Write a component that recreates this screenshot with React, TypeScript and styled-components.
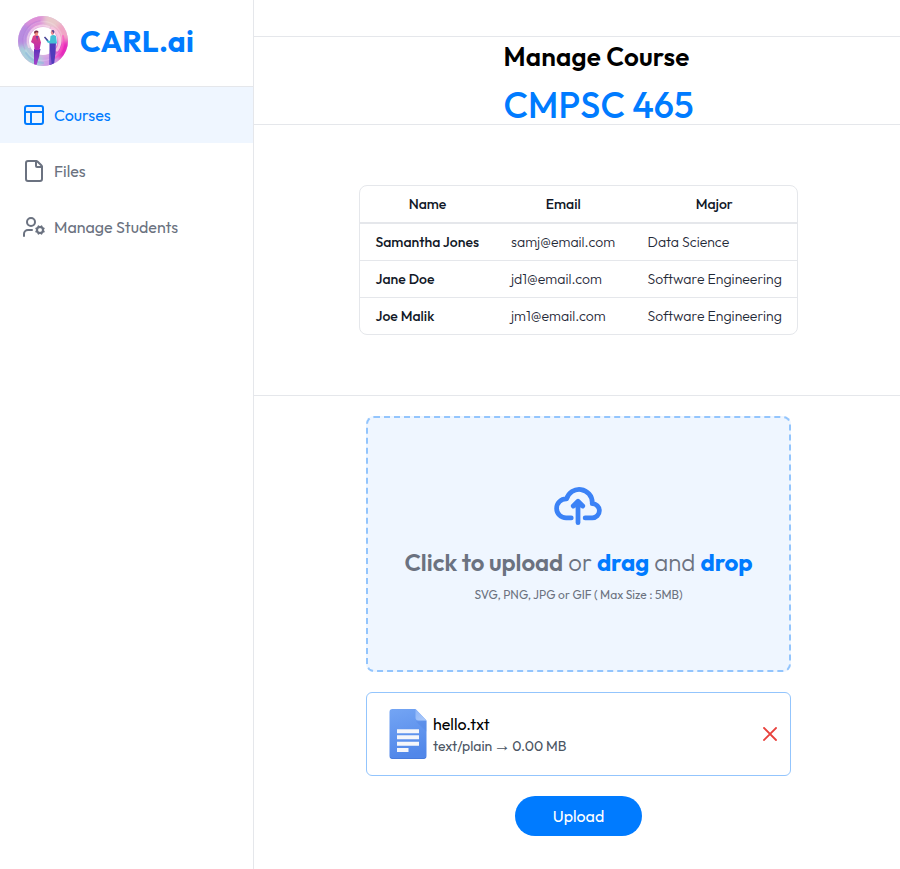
import React from 'react';
import styled, { createGlobalStyle } from 'styled-components';
import { File, PanelsTopLeft, UserCog } from 'lucide-react';

const blue = '#007bff';
const line = '#e5e7eb';
const fontStack = "Outfit, 'Liberation Sans', sans-serif";

const GlobalStyle = createGlobalStyle`
  *, *::before, *::after { box-sizing: border-box; }
  body { margin: 0; background: #fff; color: #000; overflow: hidden; font-family: ${fontStack}; }
  h1, h2, p { margin: 0; }
`;

const Page = styled.div`
  display: flex;
  width: 900px;
  height: 869px;
  overflow: hidden;
`;

const Sidebar = styled.aside`
  flex: 0 0 254px;
  border-right: 1px solid ${line};
`;

const Brand = styled.div`
  display: flex;
  align-items: center;
  gap: 12px;
  height: 87px;
  padding: 0 0 4px 18px;
  border-bottom: 1px solid ${line};
`;

const BrandName = styled.span`
  color: ${blue};
  font-size: 30px;
  font-weight: 700;
  line-height: 36px;
  letter-spacing: 0.3px;
`;

const NavItem = styled.a<{ $active?: boolean }>`
  display: flex;
  align-items: center;
  gap: 8px;
  height: 56px;
  padding: 0 22px;
  color: ${p => (p.$active ? blue : '#6b7280')};
  background: ${p => (p.$active ? '#eff6ff' : 'transparent')};
  font-size: 16px;
`;

const Main = styled.main`
  flex: 0 0 649px;
`;

const TopBar = styled.div`
  height: 37px;
  border-bottom: 1px solid ${line};
`;

const Heading = styled.header`
  height: 88px;
  padding-left: 249.5px;
  border-bottom: 1px solid ${line};
`;

const Title = styled.h1`
  font-size: 26px;
  font-weight: 600;
  line-height: 40px;
  letter-spacing: 0.18px;
`;

const CourseCode = styled.h2`
  color: ${blue};
  font-size: 36px;
  font-weight: 500;
  line-height: 56px;
`;

const TableSection = styled.section`
  display: flex;
  justify-content: center;
  height: 271px;
  padding-top: 60px;
  border-bottom: 1px solid ${line};
`;

const Table = styled.div`
  width: 439px;
  height: 150px;
  border: 1px solid ${line};
  border-radius: 8px;
  font-size: 14px;
`;

const TableRow = styled.div<{ $head?: boolean }>`
  display: grid;
  grid-template-columns: 135px 136.5px 1fr;
  height: ${p => (p.$head ? 38 : 37)}px;
  border-bottom: ${p => (p.$head ? 2 : 1)}px solid ${line};
  &:last-child { border-bottom: 0; height: 36px; }
`;

const HeadCell = styled.div`
  color: #111827;
  font-weight: 500;
  line-height: 36px;
  text-align: center;
`;

const Cell = styled.div<{ $strong?: boolean }>`
  padding-left: ${p => (p.$strong ? 15.5 : 16)}px;
  color: ${p => (p.$strong ? '#111827' : '#1f2937')};
  font-weight: ${p => (p.$strong ? 500 : 300)};
  letter-spacing: ${p => (p.$strong ? 0.02 : 0.03)}px;
  line-height: 36px;
  white-space: nowrap;
`;

const UploadSection = styled.section`
  display: flex;
  flex-direction: column;
  align-items: center;
  gap: 20px;
  padding-top: 20px;
`;

const DropZone = styled.div`
  display: flex;
  flex-direction: column;
  align-items: center;
  width: 425px;
  height: 256px;
  padding-top: 69px;
  background: #eff6ff;
  border: 2px dashed #93c5fd;
  border-radius: 8px;
  color: #6b7280;
`;

const DropPrompt = styled.p`
  margin-top: 21px;
  font-size: 24px;
  font-weight: 300;
  line-height: 32px;
  letter-spacing: -0.05px;
`;

const PromptStrong = styled.span`
  font-weight: 600;
`;

const PromptAccent = styled.span`
  color: ${blue};
  font-weight: 700;
`;

const DropHint = styled.p`
  margin-top: 9px;
  font-size: 12px;
  line-height: 16px;
`;

const FileCard = styled.div`
  display: flex;
  align-items: center;
  width: 425px;
  height: 84px;
  padding: 0 13px 0 22px;
  border: 1px solid #93c5fd;
  border-radius: 6px;
`;

const FileInfo = styled.div`
  flex: 1;
  margin-left: 6px;
`;

const FileName = styled.p`
  font-size: 16px;
  line-height: 24px;
`;

const FileMeta = styled.p`
  height: 20px;
  color: #4b5563;
  font-size: 14px;
  font-weight: 400;
  line-height: 20px;
`;

const Arrow = styled.span`
  margin: 0 -1.4px;
  font-family: 'Liberation Serif', serif;
  font-size: 17px;
  line-height: 1;
`;

const UploadButton = styled.button`
  width: 127px;
  height: 40px;
  border: 0;
  border-radius: 20px;
  background: ${blue};
  color: #fff;
  font: 400 16px/24px ${fontStack};
`;

const Logo = () => (
  <svg width="50" height="50" viewBox="0 0 50 50">
    <defs>
      <clipPath id="disc"><circle cx="25" cy="25" r="25" /></clipPath>
      <filter id="soft" x="-20%" y="-20%" width="140%" height="140%"><feGaussianBlur stdDeviation="2.6" /></filter>
      <linearGradient id="shirt" x1="0" y1="0" x2="0" y2="1">
        <stop offset="0" stopColor="#e2467e" /><stop offset="1" stopColor="#b52cb8" />
      </linearGradient>
      <linearGradient id="trousers" x1="0" y1="0" x2="0" y2="1">
        <stop offset="0" stopColor="#5a35b8" /><stop offset="1" stopColor="#a83fc9" />
      </linearGradient>
    </defs>
    <g clipPath="url(#disc)">
      <rect width="50" height="50" fill="#e3b2e2" />
      <g filter="url(#soft)" fill="none" strokeWidth="13">
        <path d="M4 31A22 22 0 0 1 11 9" stroke="#b78be0" />
        <path d="M10 10A22 22 0 0 1 27 3" stroke="#dd8fd8" />
        <path d="M26 3A22 22 0 0 1 42 11" stroke="#e8c9ca" />
        <path d="M41 9A22 22 0 0 1 47 25" stroke="#f0a6c5" />
        <path d="M47 24A22 22 0 0 1 40 42" stroke="#e52cbb" />
        <path d="M40 42A22 22 0 0 1 24 47" stroke="#cf9be6" />
        <path d="M24 47A22 22 0 0 1 4 30" stroke="#a9cfdc" />
      </g>
      <g fill="none" strokeLinecap="round">
        <circle cx="25" cy="25" r="19.500" stroke="#fff" strokeOpacity=".18" strokeWidth="1.500" />
        <path d="M7 33A20 20 0 0 1 22 5" stroke="#a45fd0" strokeOpacity=".3" strokeWidth="1.400" />
        <path d="M11 31A15 15 0 0 1 31 11" stroke="#fbe1ee" strokeOpacity=".6" strokeWidth="2" />
        <path d="M34 12A15 15 0 0 1 39 34" stroke="#f6c5df" strokeWidth="3" />
        <path d="M45 20A21 21 0 0 1 37 42" stroke="#ff4cc3" strokeOpacity=".6" strokeWidth="2" />
        <path d="M8 37A21 21 0 0 0 25 47" stroke="#8fb9dc" strokeOpacity=".6" strokeWidth="2" />
      </g>
      <circle cx="25" cy="25" r="14" fill="#fff" />
      <path d="M16 33h6.500l-1.500 8-2.500 8h-2.500z" fill="url(#trousers)" />
      <path d="M15 20q3-2 6 0l2 6.500-1.500 7.500h-5l-.5-6-3-2z" fill="url(#shirt)" />
      <path d="M17.800 20l1.400 5 1-5z" fill="#733da4" />
      <ellipse cx="18.300" cy="17.200" rx="1.800" ry="2.500" fill="#ee8b7c" />
      <path d="M16.200 17q-.5-2.500 2.100-2.500t2 2.200l-2.300-.5-1 1.500z" fill="#7d2944" />
      <path d="M31.500 26h6.500l-.5 11-1.500 12h-4.500z" fill="#513bbb" />
      <path d="M31.800 33l2 16h-2z" fill="#8c57d1" />
      <path d="M32.500 20q3-2 5.500 0l1 7.500h-7l-2.500-1-2-3.500 4.500 2z" fill="#45bfd5" />
      <ellipse cx="34.500" cy="16.500" rx="1.700" ry="2.400" fill="#e58b91" />
      <path d="M33.400 14.800q2.300-2 3 .7l-.6 2.300-1-1.800z" fill="#58448d" />
      <path d="M26.500 21l3.200 3.500" stroke="#474296" strokeWidth="1.500" />
    </g>
  </svg>
);

const CloudSvg = styled.svg`
  display: block;
  margin-right: 1px;
`;

const CloudUpload = () => (
  <CloudSvg width="48" height="38" viewBox="0 0 20 16" fill="none" stroke="#3b82f6" strokeWidth="2" strokeLinecap="round" strokeLinejoin="round" overflow="visible">
    <path d="M13 13h3a3 3 0 0 0 0-6h-.025A5.56 5.56 0 0 0 16 6.500 5.500 5.500 0 0 0 5.207 5.021C5.137 5.017 5.071 5 5 5a4 4 0 0 0 0 8h2.167M10 15V6m0 0L8 8m2-2 2 2" />
  </CloudSvg>
);

const DocIcon = () => (
  <svg width="38" height="50" viewBox="0 0 38 50">
    <defs>
      <linearGradient id="sheet" x1="0" y1="0" x2="0.2" y2="1">
        <stop offset="0" stopColor="#74a5f4" /><stop offset="1" stopColor="#5187e9" />
      </linearGradient>
      <linearGradient id="fold" x1="0" y1="0" x2="1" y2="1">
        <stop offset="0" stopColor="#8db5f8" /><stop offset="1" stopColor="#aecbfa" />
      </linearGradient>
    </defs>
    <path d="M3.500 0h23l11 11.500V47a3 3 0 0 1-3 3h-31a3 3 0 0 1-3-3V3a3 3 0 0 1 3-3z" fill="url(#sheet)" />
    <path d="M27 12.500l10.500 10V12z" fill="#4c7fdf" fillOpacity=".3" />
    <path d="M26.500 0l11 11.500h-8a3 3 0 0 1-3-3z" fill="url(#fold)" />
    <path d="M8 20.300h22v4H8zM8 26.300h22v4H8zM8 32.700h22v4H8zM8 39h11.500v4H8z" fill="#f5f6fa" />
    <path d="M1 48a3 3 0 0 0 2.500 1.500h31a3 3 0 0 0 2.500-1.500" fill="none" stroke="#3f70cf" strokeOpacity=".5" />
  </svg>
);

const RemoveIcon = () => (
  <svg width="14" height="14" viewBox="0 0 14 14" fill="none" stroke="#e8413c" strokeWidth="1.800" strokeLinecap="square">
    <path d="M1 1l12 12M13 1L1 13" />
  </svg>
);

const students = [
  { name: 'Samantha Jones', email: 'samj@email.com', major: 'Data Science' },
  { name: 'Jane Doe', email: 'jd1@email.com', major: 'Software Engineering' },
  { name: 'Joe Malik', email: 'jm1@email.com', major: 'Software Engineering' },
];

export default function App() {
  return (
    <>
      <GlobalStyle />
      <Page>
        <Sidebar>
          <Brand>
            <Logo />
            <BrandName>CARL.ai</BrandName>
          </Brand>
          <nav>
            <NavItem $active><PanelsTopLeft size={24} />Courses</NavItem>
            <NavItem><File size={24} />Files</NavItem>
            <NavItem><UserCog size={24} />Manage Students</NavItem>
          </nav>
        </Sidebar>
        <Main>
          <TopBar />
          <Heading>
            <Title>Manage Course</Title>
            <CourseCode>CMPSC 465</CourseCode>
          </Heading>
          <TableSection>
            <Table>
              <TableRow $head>
                <HeadCell>Name</HeadCell>
                <HeadCell>Email</HeadCell>
                <HeadCell>Major</HeadCell>
              </TableRow>
              {students.map(s => (
                <TableRow key={s.name}>
                  <Cell $strong>{s.name}</Cell>
                  <Cell>{s.email}</Cell>
                  <Cell>{s.major}</Cell>
                </TableRow>
              ))}
            </Table>
          </TableSection>
          <UploadSection>
            <DropZone>
              <CloudUpload />
              <DropPrompt>
                <PromptStrong>Click to upload</PromptStrong> or <PromptAccent>drag</PromptAccent> and{' '}
                <PromptAccent>drop</PromptAccent>
              </DropPrompt>
              <DropHint>SVG, PNG, JPG or GIF ( Max Size : 5MB)</DropHint>
            </DropZone>
            <FileCard>
              <DocIcon />
              <FileInfo>
                <FileName>hello.txt</FileName>
                <FileMeta>text/plain <Arrow>→</Arrow> 0.00 MB</FileMeta>
              </FileInfo>
              <RemoveIcon />
            </FileCard>
            <UploadButton>Upload</UploadButton>
          </UploadSection>
        </Main>
      </Page>
    </>
  );
}
